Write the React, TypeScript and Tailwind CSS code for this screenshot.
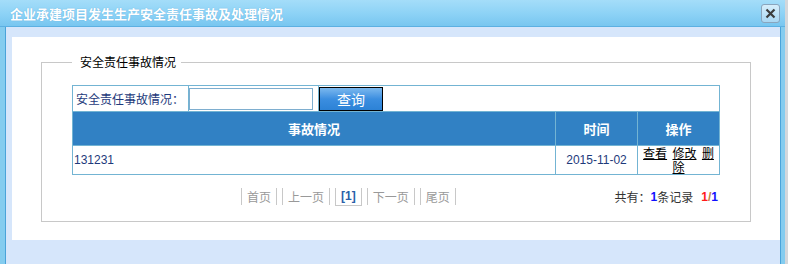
import React from "react";

const cn = "font-['SimSun','Noto_Sans_CJK_SC',sans-serif]";

const PageLink = ({ label, current }: { label: string; current?: boolean }) => (
  <span
    className={
      current
        ? "border-x border-b border-[#c8c8c8] px-[5px] font-bold text-[#2a5fa8] font-['Liberation_Sans',sans-serif]"
        : "border-x border-[#c8c8c8] pl-[5px] pr-[5px] text-[#999999]"
    }
  >
    {label}
  </span>
);

const App = () => {
  return (
    <div className={`w-[788px] h-[264px] flex bg-[#d3d7db] overflow-hidden ${cn}`}>
      <div className="w-[785px] flex flex-col">
        {/* title bar */}
        <div className="h-[27px] flex items-center justify-between pl-[10px] pr-[5px] bg-gradient-to-b from-[#a4ddf9] via-[#8ed3f6] to-[#78c6f0] border-b border-[#5cb0e2]">
          <div className="text-white text-[13px] font-bold leading-none [text-shadow:0_0_1px_#5aa6d6]">
            企业承建项目发生生产安全责任事故及处理情况
          </div>
          <div className="w-[19px] h-[19px] rounded-[3px] border border-[#8aa5bd] bg-gradient-to-b from-[#d6eefb] to-[#a9d7f3] flex items-center justify-center mt-[1px]">
            <svg width="11" height="11" viewBox="0 0 11 11">
              <path d="M1.5 1.5 L9.5 9.5 M9.5 1.5 L1.5 9.5" stroke="#3c3c3c" strokeWidth="2.2" />
            </svg>
          </div>
        </div>

        {/* body */}
        <div className="flex-1 flex">
          <div className="w-[6px] bg-[#84ccef] border-r border-[#4aa3d9]" />
          <div className="flex-1 bg-[#d6e6fb] pt-[10px] pl-[6px]">
            <div className="h-[203px] bg-white pt-[16px] pl-[29px]">
              <fieldset className="w-[710px] h-[169px] border border-[#c8c8c8] px-[30px] pt-[14px] m-0">
                <legend className="pl-[8px] pr-[5px] text-[12px] leading-[18px] text-black">安全责任事故情况</legend>

                <div className="w-[648px] border border-[#73b4d3] text-[12px]">
                  {/* search row */}
                  <div className="flex h-[26px] border-b border-[#73b4d3]">
                    <div className="w-[116px] border-r border-[#73b4d3] flex items-center pl-[3px] text-[#1e3a7b]">
                      安全责任事故情况：
                    </div>
                    <div className="w-[130px] border-r border-[#73b4d3] flex items-center">
                      <input className="w-[124px] h-[22px] border border-[#7eaecf] outline-none" />
                    </div>
                    <div className="flex-1 flex items-center">
                      <button className="w-[64px] h-[24px] border border-black bg-gradient-to-b from-[#7ab8ee] via-[#3b8ee0] to-[#2c82d6] text-white text-[14px] leading-none">
                        查询
                      </button>
                    </div>
                  </div>

                  {/* header row */}
                  <div className="flex h-[33px] bg-[#3181c4] text-white text-[13px] font-bold">
                    <div className="w-[483px] border-r border-[#73b4d3] flex items-center justify-center">事故情况</div>
                    <div className="w-[82px] border-r border-[#73b4d3] flex items-center justify-center">时间</div>
                    <div className="flex-1 flex items-center justify-center">操作</div>
                  </div>

                  {/* data row */}
                  <div className="flex h-[29px] border-t border-[#73b4d3]">
                    <div className="w-[483px] border-r border-[#73b4d3] flex items-center pl-[1px] text-[#1e3a7b] font-['Liberation_Sans',sans-serif]">
                      131231
                    </div>
                    <div className="w-[82px] border-r border-[#73b4d3] flex items-center justify-center text-[#1e3a7b] font-['Liberation_Sans',sans-serif]">
                      2015-11-02
                    </div>
                    <div className="flex-1 text-center leading-[14px] px-[3px] text-black">
                      <span className="underline">查看</span>&nbsp; <span className="underline">修改</span>&nbsp;{" "}
                      <span className="underline">删除</span>
                    </div>
                  </div>
                </div>

                {/* pager */}
                <div className="flex items-center justify-between mt-[13px] h-[17px] text-[12px] pl-[169px] pr-[2px]">
                  <div className="flex items-center gap-[5px] leading-[17px]">
                    <PageLink label="首页" />
                    <PageLink label="上一页" />
                    <PageLink label="[1]" current />
                    <PageLink label="下一页" />
                    <PageLink label="尾页" />
                  </div>
                  <div className="text-[#333333] flex items-center">
                    共有：
                    <span className="font-bold text-[#1010ff] font-['Liberation_Sans',sans-serif]">1</span>条记录
                    <span className="ml-[8px] font-bold text-[#ff1a1a] font-['Liberation_Sans',sans-serif]">1</span>
                    <span className="font-bold text-[#c08040] font-['Liberation_Sans',sans-serif]">/</span>
                    <span className="font-bold text-[#1010ff] font-['Liberation_Sans',sans-serif]">1</span>
                  </div>
                </div>
              </fieldset>
            </div>
          </div>
          <div className="w-[5px] bg-[#84ccef] border-l border-[#4aa3d9]" />
        </div>
      </div>
    </div>
  );
};

export default App;
